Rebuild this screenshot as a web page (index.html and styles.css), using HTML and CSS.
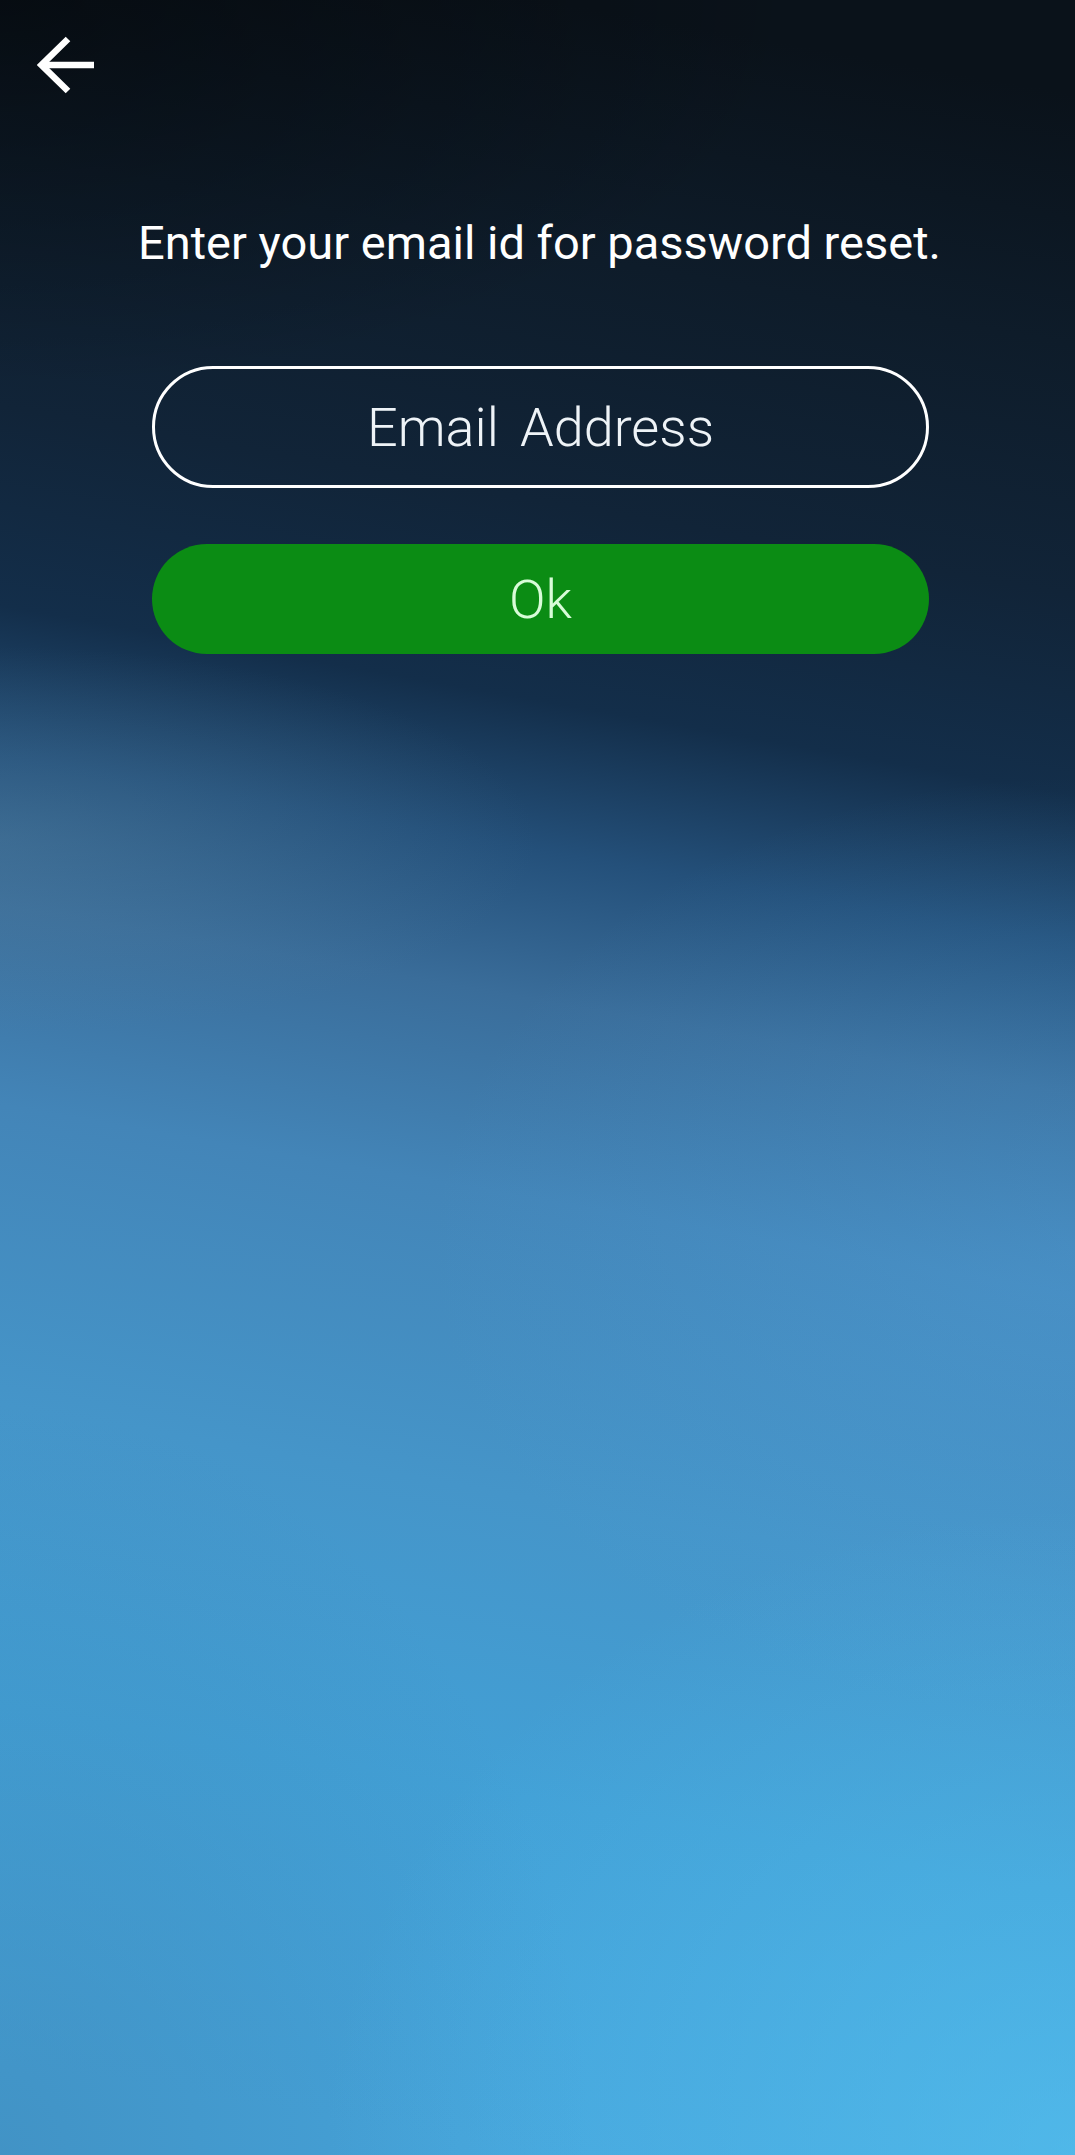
FILE: index.html
```html
<!DOCTYPE html>
<html lang="en">
<head>
<meta charset="utf-8">
<title>Reset password</title>
<link rel="stylesheet" href="styles.css">
</head>
<body>
<div class="screen">
  <header class="topbar">
    <button class="back" type="button" aria-label="Back">
      <svg class="back-icon" viewBox="0 0 58 58" width="58" height="58" aria-hidden="true">
        <path d="M57 29H5" fill="none" stroke="#ffffff" stroke-width="6.5"/>
        <path d="M31 3L4.5 29L31 55" fill="none" stroke="#ffffff" stroke-width="6.5" stroke-linejoin="miter"/>
      </svg>
    </button>
  </header>
  <main class="content">
    <p class="prompt">Enter your email id for password reset.</p>
    <form class="form">
      <input class="email" type="email" placeholder="Email Address">
      <button class="ok" type="button">Ok</button>
    </form>
  </main>
</div>
</body>
</html>
```
FILE: styles.css
```css
html, body {
  margin: 0;
  padding: 0;
}

body {
  font-family: Roboto, "Noto Sans", "Liberation Sans", sans-serif;
  background: #46a5dc;
}

.screen {
  min-height: 2155px;
  background:
    radial-gradient(ellipse 75% 18% at 0% 0%, rgba(0, 0, 0, 0.45), rgba(0, 0, 0, 0) 100%),
    radial-gradient(ellipse 70% 30% at 100% 100%, rgba(88, 200, 245, 0.55), rgba(88, 200, 245, 0) 100%),
    radial-gradient(ellipse 60% 22% at 100% 58%, rgba(84, 170, 230, 0.3), rgba(84, 170, 230, 0) 100%),
    radial-gradient(ellipse 55% 35% at 0% 100%, rgba(60, 125, 170, 0.45), rgba(60, 125, 170, 0) 100%),
    radial-gradient(ellipse 50% 9% at 0% 39%, rgba(85, 130, 160, 0.35), rgba(85, 130, 160, 0) 100%),
    linear-gradient(190deg, #0a121a 4%, #0e1c2a 14.7%, #112438 25.4%, #132e4a 33.9%, #24507a 40.3%, #3a6d9a 46.7%, #4385b8 55.2%, #4595c9 68%, #42a0d6 80.8%, #46a5dc 96%);
}

.topbar {
  padding: 36px 0 0 37px;
  height: 58px;
}

.back {
  display: block;
  width: 58px;
  height: 58px;
  padding: 0;
  margin: 0;
  border: 0;
  background: none;
  cursor: pointer;
}

.back-icon {
  display: block;
}

.content {
  display: flex;
  flex-direction: column;
  align-items: center;
}

.prompt {
  margin: 121px 0 0;
  padding-left: 4px;
  font-size: 47px;
  line-height: 56px;
  font-weight: 400;
  color: #ffffff;
  text-align: center;
}

.form {
  align-self: flex-start;
  width: 777px;
  margin: 95px 0 0 152px;
  display: flex;
  flex-direction: column;
  gap: 56px;
}

.email {
  box-sizing: border-box;
  width: 100%;
  height: 122px;
  border: 3px solid #ffffff;
  border-radius: 61px;
  background: transparent;
  color: #ffffff;
  font-family: Roboto, "Noto Sans", sans-serif;
  font-size: 54px;
  font-weight: 300;
  word-spacing: 8px;
  text-align: center;
  outline: none;
  padding: 0 40px;
}

.email::placeholder {
  color: #eef3f7;
  opacity: 1;
}

.ok {
  width: 100%;
  height: 110px;
  border: 0;
  border-radius: 55px;
  background: #0b8c14;
  color: #d8fcd8;
  font-family: Roboto, "Noto Sans", sans-serif;
  font-size: 54px;
  font-weight: 300;
  cursor: pointer;
}
```
